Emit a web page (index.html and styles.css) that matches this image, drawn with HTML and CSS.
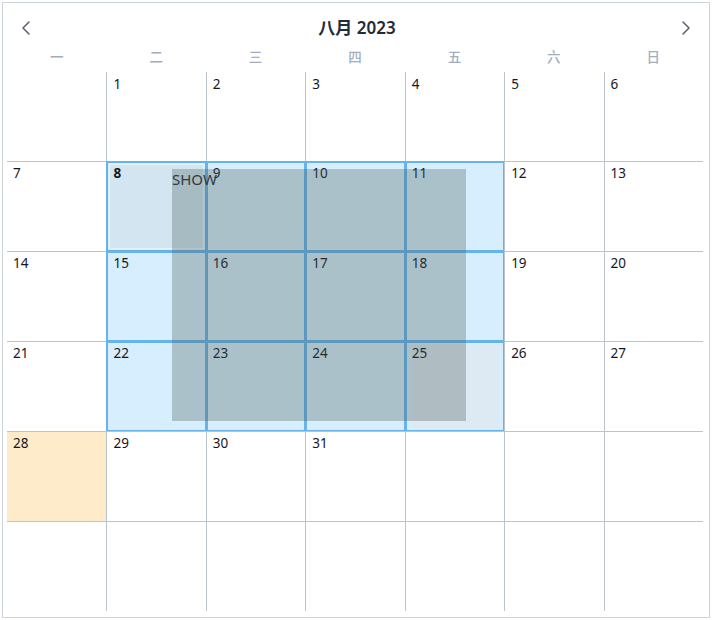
FILE: index.html
```html
<!DOCTYPE html>
<html lang="zh">
<head>
<meta charset="utf-8">
<title>八月 2023</title>
<link rel="stylesheet" href="styles.css">
</head>
<body>
<div class="calendar">
  <div class="cal-header">
    <button class="nav-btn" aria-label="上个月">
      <svg width="12" height="16" viewBox="0 0 12 16"><polyline points="8,2 2,8 8,14" fill="none" stroke="#5c6577" stroke-width="1.6" stroke-linecap="round" stroke-linejoin="round"/></svg>
    </button>
    <div class="cal-title"><span class="month">八月</span> 2023</div>
    <button class="nav-btn" aria-label="下个月">
      <svg width="12" height="16" viewBox="0 0 12 16"><polyline points="4,2 10,8 4,14" fill="none" stroke="#5c6577" stroke-width="1.6" stroke-linecap="round" stroke-linejoin="round"/></svg>
    </button>
  </div>
  <div class="weekdays">
    <div>一</div><div>二</div><div>三</div><div>四</div><div>五</div><div>六</div><div>日</div>
  </div>
  <div class="month-grid">
    <div class="cell first-row first-col"></div>
    <div class="cell first-row">1</div>
    <div class="cell first-row">2</div>
    <div class="cell first-row">3</div>
    <div class="cell first-row">4</div>
    <div class="cell first-row">5</div>
    <div class="cell first-row">6</div>

    <div class="cell first-col">7</div>
    <div class="cell sel"><span class="ghost ghost-a"></span><span class="num bold">8</span></div>
    <div class="cell sel">9</div>
    <div class="cell sel">10</div>
    <div class="cell sel">11</div>
    <div class="cell">12</div>
    <div class="cell">13</div>

    <div class="cell first-col">14</div>
    <div class="cell sel">15</div>
    <div class="cell sel">16</div>
    <div class="cell sel">17</div>
    <div class="cell sel">18</div>
    <div class="cell">19</div>
    <div class="cell">20</div>

    <div class="cell first-col">21</div>
    <div class="cell sel">22</div>
    <div class="cell sel">23</div>
    <div class="cell sel">24</div>
    <div class="cell sel"><span class="ghost ghost-b"></span><span class="num">25</span></div>
    <div class="cell">26</div>
    <div class="cell">27</div>

    <div class="cell first-col today">28</div>
    <div class="cell">29</div>
    <div class="cell">30</div>
    <div class="cell">31</div>
    <div class="cell"></div>
    <div class="cell"></div>
    <div class="cell"></div>

    <div class="cell first-col"></div>
    <div class="cell"></div>
    <div class="cell"></div>
    <div class="cell"></div>
    <div class="cell"></div>
    <div class="cell"></div>
    <div class="cell"></div>

    <div class="drag-overlay">SHOW</div>
  </div>
</div>
</body>
</html>
```

FILE: styles.css
```css
* { box-sizing: border-box; }

html, body {
  margin: 0;
  padding: 0;
  background: #ffffff;
}

body {
  padding: 2px;
  font-family: "Noto Sans", "Noto Sans CJK SC", sans-serif;
  color: #1b1d2b;
}

.calendar {
  width: 708px;
  height: 616px;
  border: 1px solid #cdd4de;
  padding: 13px 6px 0 4px;
}

.cal-header {
  height: 24px;
  display: flex;
  align-items: center;
  justify-content: space-between;
  padding: 0 12px 0 14px;
}

.nav-btn {
  border: 0;
  background: none;
  padding: 0;
  width: 12px;
  height: 16px;
  display: flex;
  align-items: center;
  justify-content: center;
  cursor: pointer;
}

.cal-title {
  font-size: 17px;
  font-weight: 600;
  color: #222b3a;
  line-height: 24px;
  margin-left: 2px;
}

.cal-title .month {
  font-weight: 700;
}

.weekdays {
  margin-top: 8px;
  height: 18px;
  display: grid;
  grid-template-columns: repeat(7, 1fr);
  font-size: 13.5px;
  font-weight: 500;
  line-height: 18px;
  color: #a2aec0;
  text-align: center;
}

.month-grid {
  position: relative;
  margin-top: 6px;
  width: 696px;
  display: grid;
  grid-template-columns: repeat(7, 1fr);
  grid-template-rows: 89px repeat(5, 90px);
}

.cell {
  position: relative;
  border-top: 1px solid #b9c4cf;
  border-left: 1px solid #b9c4cf;
  padding: 1px 0 0 6px;
  font-size: 13.5px;
  line-height: 20px;
  color: #15171f;
}

.cell.first-row { border-top: 0; padding-top: 2px; }
.cell.first-col { border-left: 0; padding-left: 6px; }

.cell.sel {
  background: #d6eefd;
  border-top-color: #6ab3e9;
  border-left-color: #6ab3e9;
  box-shadow: inset 0 0 0 1px #66b2ea;
}

.cell.today {
  background: #fdebc9;
}

.num {
  position: relative;
}

.bold { font-weight: 700; }

.ghost {
  position: absolute;
}

.ghost-a {
  left: 2px;
  top: 2px;
  right: 2px;
  bottom: 2px;
  background: #d2e5f1;
  border: 1px solid #e8f2f9;
}

.ghost-b {
  left: 6px;
  top: 3px;
  right: 5px;
  bottom: 3px;
  background: #dde9f3;
}

.drag-overlay {
  position: absolute;
  left: 165px;
  top: 97px;
  width: 294px;
  height: 252px;
  background: rgba(70, 88, 85, 0.3);
  font-size: 15px;
  line-height: 20px;
  color: #343a44;
}
```
